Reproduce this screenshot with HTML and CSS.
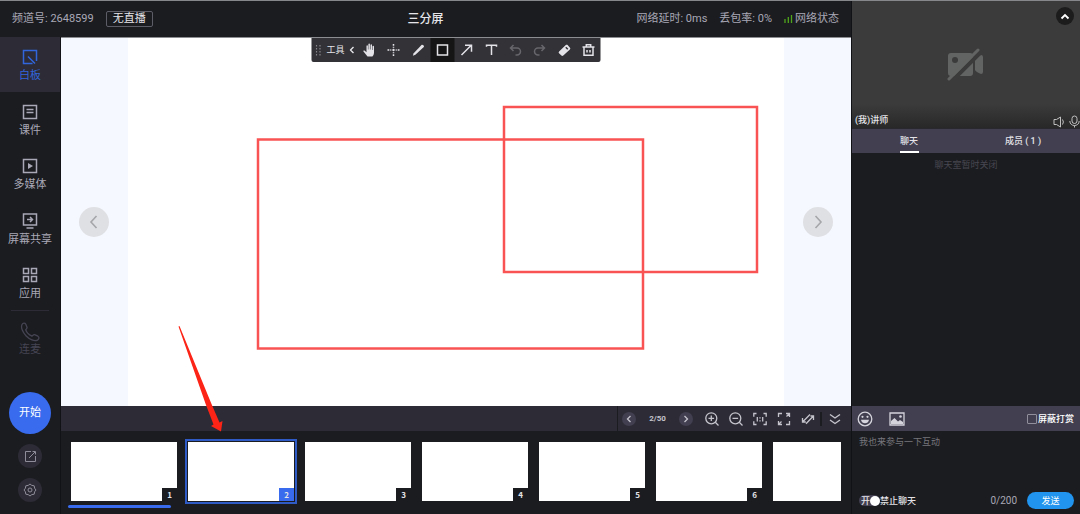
FILE: index.html
```html
<!DOCTYPE html>
<html lang="zh-CN">
<head>
  <meta charset="UTF-8" />
  <meta name="viewport" content="width=device-width, initial-scale=1.0"/>
  <title>三分屏</title>
  <link rel="stylesheet" href="styles.css">
</head>
<body>

  <div class="main">
    <header class="topbar">
      <div class="channel">
        <span>频道号: 2648599</span>
        <span class="live-tag">无直播</span>
      </div>
      <h1>三分屏</h1>
      <div class="network">
        <span>网络延时: 0ms</span>
        <span>丢包率: 0%</span>
        <span class="signal">
          <svg width="9" height="8" viewBox="0 0 9 8"><path d="M1 4v4M4.300 2v6M7.500 0v8" stroke="#4fa51c" stroke-width="1.3"/></svg>
          网络状态
        </span>
      </div>
    </header>

    <div class="workspace">
      <nav class="sidebar">
        <div class="nav-list">
          <a href="#" class="nav-item active">
            <svg class="icon" viewBox="0 0 16 16"><path d="M10.500 14.500h-9v-13h13V12M6 7.500l7 7"/></svg>
            白板
          </a>
          <a href="#" class="nav-item">
            <svg class="icon" viewBox="0 0 16 16"><path d="M1.500 1.500h13v13h-13zM4.500 5.500h7M4.500 8.500h7"/></svg>
            课件
          </a>
          <a href="#" class="nav-item">
            <svg class="icon" viewBox="0 0 16 16"><path d="M1.500 1.500h13v13h-13z"/><path class="solid" d="M6 5l5 3-5 3z"/></svg>
            多媒体
          </a>
          <a href="#" class="nav-item">
            <svg class="icon" viewBox="0 0 16 16"><path d="M1.500 1h13v11h-13zM4.500 15h7M5 6.500h5M8 4l2.500 2.500L8 9"/></svg>
            屏幕共享
          </a>
          <a href="#" class="nav-item">
            <svg class="icon" viewBox="0 0 16 16"><path d="M1.500 1.500h5v5h-5zM9.500 1.500h5v5h-5zM1.500 9.500h5v5h-5zM9.500 9.500h5v5h-5z"/></svg>
            应用
          </a>
        </div>
        <a href="#" class="nav-item disabled">
          <svg class="icon icon-phone" viewBox="0 0 20 20"><path d="M2 2.500C3 .8 5 .8 5.800 2.300L7 5.200c.4 1-.8 1.800-1.300 2.600.8 2.600 3.300 5 6.200 6.300.9-.5 1.600-1.800 2.700-1.400l3.300 1.500c1.600.9 1.200 2.800-.4 3.900-3 1.700-8-.7-11.300-4.100C2.700 10.500.6 5.500 2 2.500z"/></svg>
          连麦
        </a>
        <div class="side-actions">
          <button class="start">开始</button>
          <button class="round" aria-label="分享">
            <svg width="13" height="13" viewBox="0 0 13 13"><path d="M7 1.500H1.500v10h10V6M5 8l6-6M8.500 1.500h3v3"/></svg>
          </button>
          <button class="round" aria-label="设置">
            <svg width="14" height="14" viewBox="0 0 14 14"><path d="M7 1l1.800 1.400 2.400.4.400 2.400L13 7l-1.400 1.800-.4 2.400-2.400.4L7 13l-1.800-1.400-2.400-.4-.4-2.400L1 7l1.400-1.800.4-2.400 2.400-.4z"/><circle cx="7" cy="7" r="2"/></svg>
          </button>
        </div>
      </nav>

      <div class="stage">
        <div class="board">
          <button class="page-turn" aria-label="上一页"><svg width="10" height="14" viewBox="0 0 10 14"><path d="M7.500 1L2 7l5.500 6"/></svg></button>
          <div class="slide"></div>
          <button class="page-turn" aria-label="下一页"><svg width="10" height="14" viewBox="0 0 10 14"><path d="M2.500 1L8 7l-5.500 6"/></svg></button>

          <svg class="drawing" viewBox="0 0 790 368">
            <rect x="197" y="101.500" width="385" height="209"/>
            <rect x="443" y="69" width="253" height="165"/>
            <path d="M117.500 288.500L145 367l7.500 19.500-2.500 1.500 10 5.500 1.500-10.500-3 1.500L150.500 366 118.500 288z"/>
          </svg>

          <div class="tools">
            <div class="tools-head">
              <svg width="6" height="11" viewBox="0 0 6 11"><path d="M1 0v11M4.500 0v11" stroke="#85858a" stroke-width="1.2" stroke-dasharray="1.5 1.500"/></svg>
              <span>工具</span>
              <svg width="5" height="8" viewBox="0 0 5 8"><path d="M4 1L1 4l3 3" stroke="#e4e4e8" stroke-width="1.4"/></svg>
            </div>
            <button aria-label="移动"><svg viewBox="0 0 14 14"><path class="solid" d="M5 13.500L1 8.600c-.6-.9.600-1.500 1.300-.8L4 9.200V3c0-1 1.300-1 1.400 0v3.500h.5V1.300c0-1 1.500-1 1.500 0v5.200H8V2c0-1 1.500-1 1.500 0v5h.5V3.500c0-1 1.500-1 1.500 0V9.500c0 2-.8 3-1.600 4z"/></svg></button>
            <button aria-label="激光笔"><svg viewBox="0 0 14 14"><path d="M7 1v1.800M7 3.800v1M7 9.200v1M7 11.200V13M1 7h1.800M3.800 7h1M9.200 7h1M11.200 7H13"/><circle class="solid" cx="7" cy="7" r="1.2"/></svg></button>
            <button aria-label="画笔"><svg viewBox="0 0 14 14"><path class="solid" d="M1.300 12.800l.9-2.600L10 2c.9-.9 3.200.9 2.300 2l-8.400 7.800z"/></svg></button>
            <button class="on" aria-label="矩形"><svg viewBox="0 0 14 14"><path d="M2 2h10v10H2z"/></svg></button>
            <button aria-label="箭头"><svg viewBox="0 0 14 14"><path d="M2 12l9.500-9.500M5.500 2.300H12v6.500"/></svg></button>
            <button aria-label="文本"><svg viewBox="0 0 14 14"><path d="M2 3.800V2.300h10v1.500M7 2.300V12"/></svg></button>
            <button class="dim" aria-label="撤销"><svg viewBox="0 0 14 14"><path d="M5 2L2 5l3 3M2 5h6.500a3.500 3.500 0 0 1 0 7H7"/></svg></button>
            <button class="dim" aria-label="重做"><svg viewBox="0 0 14 14"><path d="M9 2l3 3-3 3M12 5H5.500a3.500 3.500 0 0 0 0 7H7"/></svg></button>
            <button aria-label="橡皮"><svg viewBox="0 0 14 14"><path class="solid" d="M1.600 8.500l6.700-6.400c.6-.5 1.300-.5 1.800 0l2.400 2.600c.5.600.4 1.200-.1 1.700l-6.600 6.200c-.6.5-1.400.5-1.900 0L1.500 10.200c-.5-.6-.4-1.200.1-1.700z"/><path d="M8.300 4.300l2 2" stroke="#323237"/></svg></button>
            <button aria-label="删除"><svg viewBox="0 0 14 14"><path d="M1 4h12M2.500 4v8.300h9V4M4.800 3.500V1.800h4.400v1.700M5.500 7v2.500M8.500 7v2.500"/></svg></button>
          </div>
        </div>

        <div class="pager">
          <div class="pager-tools">
            <div class="pages">
              <button class="page-btn" aria-label="上一页"><svg width="6" height="8" viewBox="0 0 6 8"><path d="M4.500 1l-3 3 3 3"/></svg></button>
              <span>2/50</span>
              <button class="page-btn" aria-label="下一页"><svg width="6" height="8" viewBox="0 0 6 8"><path d="M1.500 1l3 3-3 3"/></svg></button>
            </div>
            <div class="zoom-tools">
              <button aria-label="放大"><svg viewBox="0 0 14 14"><circle cx="6.300" cy="6.300" r="5.500"/><path d="M10.300 10.300l3.200 3.200M3.500 6.300h5.600M6.300 3.500v5.600"/></svg></button>
              <button aria-label="缩小"><svg viewBox="0 0 14 14"><circle cx="6.300" cy="6.300" r="5.500"/><path d="M10.300 10.300l3.200 3.200M3.500 6.300h5.600"/></svg></button>
              <button aria-label="原始大小"><svg viewBox="0 0 14 14"><path d="M3.500 1.500H.8v3.200M10.500 1.500h2.700v3.200M3.500 12.500H.8V9.300M10.500 12.500h2.700V9.300M4.300 5v4.500M9.700 5v4.500M7 5.300v1.200M7 8.200v1.200"/></svg></button>
              <button aria-label="全屏"><svg viewBox="0 0 14 14"><path d="M5 1.500H1.500V5M9 1.500h3.500V5M5 12.500H1.500V9M9 12.500h3.500V9M9.500 4.500l2.500-2.500M4.500 9.500L2 12"/></svg></button>
              <button aria-label="同步"><svg viewBox="0 0 14 14"><path d="M9 2.500L1.800 9.700M1.500 6v4h3.300M5 11.700l7.200-7.400M9.500 4h3v4"/></svg></button>
            </div>
            <button class="collapse" aria-label="收起"><svg width="12" height="12" viewBox="0 0 12 12"><path d="M1 1.500l5 3.500 5-3.500M1 7l5 3.500L11 7"/></svg></button>
          </div>
        </div>

        <div class="thumbs">
          <ol>
            <li><button class="thumb"><span>1</span></button></li>
            <li><button class="thumb selected"><span>2</span></button></li>
            <li><button class="thumb"><span>3</span></button></li>
            <li><button class="thumb"><span>4</span></button></li>
            <li><button class="thumb"><span>5</span></button></li>
            <li><button class="thumb"><span>6</span></button></li>
            <li><button class="thumb" aria-label="下一张"></button></li>
          </ol>
          <div class="scrollbar"></div>
        </div>
      </div>
    </div>
  </div>

  <aside class="panel">
    <div class="video">
      <button class="fold" aria-label="收起视频"><svg width="10" height="7" viewBox="0 0 10 7"><path d="M1.500 5.500L5 2l3.500 3.500" stroke="#fff" stroke-width="1.8"/></svg></button>
      <svg class="camera" width="38" height="34" viewBox="0 0 38 34">
        <path d="M4 5h19q3 0 3 3v17q0 3-3 3H4q-3 0-3-3V8q0-3 3-3zM28 11q1-2 6-4 2 0 2 2v15q0 2-2 2-5-2-6-4z" fill="#626463"/>
        <circle cx="8" cy="12" r="3" fill="#3b3b3b"/>
        <path d="M4 34L35 3" stroke="#3b3b3b" stroke-width="4"/>
        <path d="M2 31L31 2" stroke="#626463" stroke-width="3" stroke-linecap="round"/>
      </svg>
      <div class="video-bar">
        <span>(我)讲师</span>
        <span class="video-icons">
          <svg width="12" height="12" viewBox="0 0 12 12"><path d="M1 3.500h2.500L7.500 1v10L3.500 8.500H1zM9.500 3.500q1.800 2.500 0 5"/></svg>
          <svg width="11" height="13" viewBox="0 0 11 13"><path d="M3 3.500a2.500 2.500 0 0 1 5 0V6a2.500 2.500 0 0 1-5 0zM.8 6c0 6 9.400 6 9.400 0M5.500 10.500v2"/></svg>
        </span>
      </div>
    </div>
    <div class="tabs">
      <button class="current">聊天</button>
      <button>成员 ( 1 )</button>
    </div>
    <div class="chat-box">聊天室暂时关闭</div>
    <div class="chat-tools">
      <button aria-label="表情"><svg width="16" height="16" viewBox="0 0 16 16"><circle cx="8" cy="8" r="6.800"/><circle class="solid" cx="5.500" cy="5.800" r="1.1"/><circle class="solid" cx="10.500" cy="5.800" r="1.1"/><path class="solid" d="M4 8.700h8c-.6 4.700-7.400 4.700-8 0z"/></svg></button>
      <button aria-label="图片"><svg width="16" height="14" viewBox="0 0 16 14"><path d="M1 1h14v12H1z"/><circle class="solid" cx="11.500" cy="4.500" r="1.3"/><path class="solid" d="M2 12V9l3.500-3L9 9.500l2-1.500 3 2v2z"/></svg></button>
      <label class="reward"><input type="checkbox">屏蔽打赏</label>
    </div>
    <form class="chat-form">
      <textarea aria-label="聊天内容" placeholder="我也来参与一下互动"></textarea>
      <div class="form-row">
        <label class="switch"><span class="track">开<input type="checkbox" checked></span>禁止聊天</label>
        <span class="count">0/200</span>
        <button type="button" class="send">发送</button>
      </div>
    </form>
  </aside>

</body>
</html>
```
FILE: styles.css
```css
* {
  margin: 0;
  padding: 0;
  box-sizing: border-box;
}

body {
  display: flex;
  height: 100vh;
  overflow: hidden;
  border-top: 1px solid #85878a;
  background-color: #1b1c20;
  color: #a9a8b6;
  font-family: Roboto, "Noto Sans CJK SC", sans-serif;
  font-size: 11px;
  line-height: 16px;
}

button,
textarea {
  border: none;
  background: none;
  color: inherit;
  font: inherit;
}

button {
  display: flex;
  align-items: center;
  justify-content: center;
  cursor: pointer;
}

svg {
  display: block;
  flex: none;
  fill: none;
  stroke: currentColor;
}

svg .solid {
  fill: currentColor;
  stroke: none;
}

.main {
  flex: 1;
  min-width: 0;
  display: flex;
  flex-direction: column;
}

/* top bar */
.topbar {
  display: grid;
  grid-template-columns: 1fr auto 1fr;
  align-items: center;
  height: 36px;
  padding: 0 12px;
}

.topbar h1 {
  color: #e6e6ea;
  font-size: 12px;
  font-weight: 500;
}

.channel,
.network,
.signal {
  display: flex;
  align-items: center;
}

.channel {
  gap: 12px;
}

.live-tag {
  padding: 0 6px;
  border: 1px solid #5d5d68;
  border-radius: 2px;
  color: #e6e6ea;
  line-height: 14px;
}

.network {
  justify-content: flex-end;
  gap: 12px;
}

.signal {
  gap: 2px;
}

.workspace {
  flex: 1;
  min-height: 0;
  display: flex;
}

/* sidebar */
.sidebar {
  display: flex;
  flex-direction: column;
  width: 61px;
  border-right: 1px solid #111216;
}

.nav-list {
  display: flex;
  flex-direction: column;
  height: 273px;
}

.nav-item {
  flex: 1;
  display: flex;
  flex-direction: column;
  align-items: center;
  gap: 3px;
  padding-top: 12px;
  color: #a9a8b6;
  text-decoration: none;
}

.nav-item.active {
  background-color: #2d2c36;
  color: #3265dc;
}

.nav-item.disabled {
  flex: none;
  gap: 0;
  margin: 0 11px;
  padding-top: 11px;
  border-top: 1px solid #2d2c36;
  color: #454453;
}

.icon {
  width: 16px;
  height: 16px;
  stroke-width: 1.5;
}

.icon-phone {
  width: 20px;
  height: 20px;
  stroke-width: 1.3;
}

.side-actions {
  display: flex;
  flex-direction: column;
  align-items: center;
  gap: 10px;
  margin-top: auto;
  padding-bottom: 12px;
}

.start {
  width: 42px;
  height: 42px;
  border-radius: 50%;
  background-color: #386bed;
  color: #fff;
}

.round {
  width: 24px;
  height: 24px;
  border-radius: 50%;
  background-color: #2d2c36;
  color: #8e8d99;
}

/* whiteboard */
.stage {
  flex: 1;
  min-width: 0;
  display: flex;
  flex-direction: column;
}

.board {
  position: relative;
  flex: 1;
  min-height: 0;
  display: flex;
  align-items: center;
  gap: 19px;
  padding: 0 18px;
  border-top: 1px solid #8b8d91;
  background-color: #f5f8ff;
}

.slide {
  flex: 1;
  align-self: stretch;
  background-color: #fff;
}

.page-turn {
  width: 30px;
  height: 30px;
  border-radius: 50%;
  background-color: #dfe0e4;
  color: #a5a6a9;
}

.page-turn svg {
  stroke-width: 1.6;
}

.drawing {
  position: absolute;
  inset: 0;
  z-index: 1;
  width: 100%;
  height: 100%;
  overflow: visible;
  pointer-events: none;
}

.drawing rect {
  stroke: #f95453;
  stroke-width: 2.5;
}

.drawing path {
  fill: #fb2416;
  stroke: none;
}

.tools {
  position: absolute;
  top: 0;
  left: 50%;
  z-index: 2;
  display: flex;
  width: 289px;
  height: 24px;
  transform: translateX(-50%);
  border-radius: 0 0 2px 2px;
  background-color: #323237;
  color: #e4e4e8;
}

.tools-head {
  display: flex;
  align-items: center;
  gap: 5px;
  width: 46px;
  padding-left: 4px;
  font-size: 9px;
}

.tools button {
  flex: 1;
}

.tools button svg {
  width: 14px;
  height: 14px;
  stroke-width: 1.5;
}

.tools .on {
  background-color: #151515;
}

.tools .dim {
  color: #66666b;
}

/* pager */
.pager {
  display: flex;
  justify-content: flex-end;
  height: 25px;
  background-color: #2d2c36;
}

.pager-tools {
  display: flex;
  align-items: center;
  height: 100%;
  padding: 0 10px 0 4px;
  border-left: 1px solid #1b1c20;
  color: #c5c4cd;
}

.pages {
  display: flex;
  align-items: center;
  justify-content: space-between;
  width: 71px;
  margin-right: 7px;
  font-size: 8px;
  font-weight: 700;
}

.page-btn {
  width: 14px;
  height: 14px;
  border-radius: 50%;
  background-color: #413f50;
}

.page-btn svg {
  stroke-width: 1.3;
}

.zoom-tools {
  display: flex;
}

.zoom-tools button {
  width: 24px;
}

.zoom-tools svg {
  width: 14px;
  height: 14px;
  stroke-width: 1.3;
}

.collapse {
  height: 14px;
  padding-left: 7px;
  border-left: 2px solid #1b1c20;
}

.collapse svg {
  stroke-width: 1.4;
}

/* page thumbnails */
.thumbs {
  height: 83px;
  padding: 5px 10px 0 5px;
}

.thumbs ol {
  display: flex;
  gap: 11px;
  padding: 6px 0 4px 5px;
  overflow: hidden;
  list-style: none;
}

.thumb {
  align-items: flex-end;
  justify-content: flex-end;
  width: 106px;
  height: 59px;
  background-color: #fff;
}

.thumb span {
  width: 15px;
  height: 13px;
  background-color: #1b1c20;
  color: #e4e4e8;
  font-family: "Noto Sans CJK SC", sans-serif;
  font-size: 8px;
  font-weight: 700;
  line-height: 13px;
}

.thumb.selected {
  outline: 2px solid #2f5bc6;
  outline-offset: 1px;
}

.thumb.selected span {
  background-color: #386bed;
}

.scrollbar {
  width: 103px;
  height: 3px;
  margin-left: 2px;
  border-radius: 2px;
  background-color: #386bed;
}

/* right panel */
.panel {
  display: flex;
  flex-direction: column;
  width: 229px;
  border-left: 1px solid #111216;
  color: #e4e4e8;
  font-size: 9px;
}

.video {
  position: relative;
  display: flex;
  align-items: center;
  justify-content: center;
  height: 127px;
  background-color: #3b3b3b;
}

.fold {
  position: absolute;
  top: 6px;
  right: 6px;
  width: 18px;
  height: 18px;
  border-radius: 50%;
  background-color: #1c1c1c;
}

.camera {
  stroke: none;
}

.video-bar {
  position: absolute;
  right: 0;
  bottom: 0;
  left: 0;
  display: flex;
  align-items: flex-end;
  justify-content: space-between;
  height: 24px;
  padding-left: 3px;
  background: linear-gradient(transparent, #282828);
  font-weight: 500;
}

.video-icons {
  display: flex;
  align-items: center;
  gap: 4px;
  color: #c0c0c0;
}

.tabs {
  display: flex;
  height: 25px;
  border-top: 1px solid #29282f;
  background-color: #413f50;
  font-weight: 500;
}

.tabs button {
  position: relative;
  flex: 1;
}

.current::after {
  content: "";
  position: absolute;
  bottom: 0;
  width: 19px;
  height: 2px;
  background-color: #fff;
}

.chat-box {
  flex: 1;
  padding-top: 4px;
  color: #484751;
  text-align: center;
}

.chat-tools {
  display: flex;
  align-items: center;
  gap: 16px;
  height: 25px;
  padding: 0 6px 0 5px;
  background-color: #413f50;
  color: #d5d4dc;
}

.chat-tools svg {
  stroke-width: 1.3;
}

.reward {
  display: flex;
  align-items: center;
  gap: 1px;
  margin-left: auto;
  color: #fff;
  font-weight: 500;
}

.reward input {
  appearance: none;
  width: 10px;
  height: 10px;
  border: 1px solid #918f9c;
  border-radius: 1px;
}

.chat-form {
  display: flex;
  flex-direction: column;
  height: 83px;
  padding: 3px 6px 5px 7px;
}

.chat-form textarea {
  flex: 1;
  min-height: 0;
  resize: none;
  outline: none;
}

.chat-form textarea::placeholder {
  color: #77767c;
}

.form-row {
  display: flex;
  align-items: center;
}

.switch {
  display: flex;
  align-items: center;
  font-weight: 500;
}

.track {
  display: flex;
  align-items: center;
  height: 11px;
  padding-left: 2px;
  border-radius: 6px;
  background-color: #413f50;
}

.track input {
  appearance: none;
  width: 10px;
  height: 10px;
  border-radius: 50%;
  background-color: #fff;
}

.count {
  margin: 0 10px 0 auto;
  color: #a9a8b6;
  font-size: 10px;
}

.send {
  width: 47px;
  height: 17px;
  border-radius: 9px;
  background-color: #2094ee;
  color: #fff;
}
```
